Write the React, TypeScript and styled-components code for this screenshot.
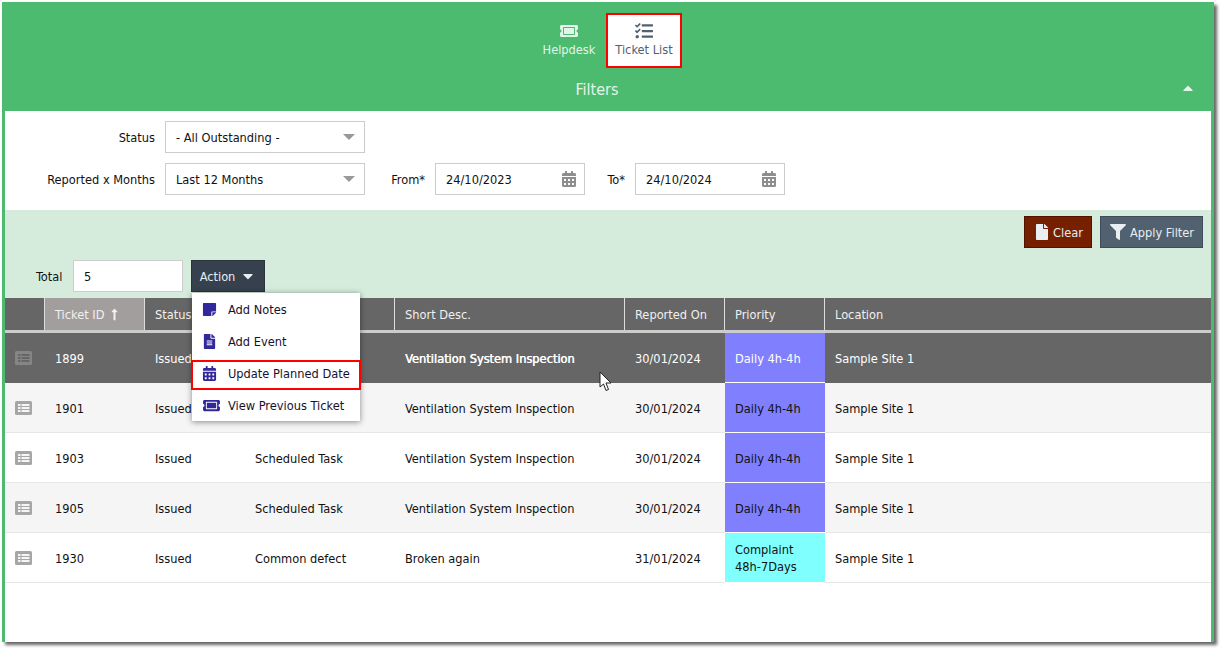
import React from 'react';
import styled, { createGlobalStyle } from 'styled-components';
import {
  FaCalendarAlt,
  FaCaretDown,
  FaCaretUp,
  FaFile,
  FaFileAlt,
  FaFilter,
  FaLongArrowAltUp,
  FaStickyNote,
  FaTasks,
  FaTicketAlt,
} from 'react-icons/fa';

const GlobalStyle = createGlobalStyle`
  html, body {
    margin: 0;
    padding: 0;
    background: #fff;
    height: 100%;
  }
  body {
    font-family: 'DejaVu Sans Condensed', 'DejaVu Sans', sans-serif;
    font-size: 12.7px;
    color: #111;
  }
`;

const Frame = styled.div`
  position: relative;
  box-sizing: border-box;
  width: 1212px;
  height: 640px;
  margin-left: 2px;
  top: 2px;
  border-left: 3px solid #4cba6f;
  border-right: 3px solid #4cba6f;
  box-shadow: 3px 3px 3px rgba(0, 0, 0, 0.6);
  background: #fff;
`;

const Header = styled.header`
  background: #4cba6f;
  height: 109px;
  margin: 0 -3px;
  display: flex;
  flex-direction: column;
`;

const Nav = styled.nav`
  display: flex;
  justify-content: center;
  padding: 11px 0 0 0;
  height: 55px;
  margin-right: 4px;
`;

const NavItem = styled.div<{ $active?: boolean }>`
  box-sizing: border-box;
  width: 76px;
  height: 55px;
  display: flex;
  flex-direction: column;
  align-items: center;
  justify-content: center;
  gap: 2px;
  padding-bottom: 3px;
  padding-left: ${(p) => (p.$active ? '0' : '2px')};
  background: ${(p) => (p.$active ? '#fff' : 'transparent')};
  border: 2px solid ${(p) => (p.$active ? '#f00' : 'transparent')};
  color: ${(p) => (p.$active ? '#52616f' : '#e3f5e8')};
  svg {
    font-size: 18px;
  }
`;

const FilterBar = styled.div`
  flex: 1;
  display: flex;
  align-items: center;
  justify-content: center;
  position: relative;
  padding-right: 22px;
  color: #e3f5e8;
  font-size: 16px;
  svg {
    position: absolute;
    right: 18px;
    top: 12px;
    font-size: 16px;
  }
`;

const FilterForm = styled.section`
  height: 99px;
  box-sizing: border-box;
  padding-top: 10px;
  display: flex;
  flex-direction: column;
  gap: 10px;
`;

const FormRow = styled.div`
  display: flex;
  align-items: center;
  height: 32px;
`;

const FieldLabel = styled.label<{ $width: number }>`
  width: ${(p) => p.$width}px;
  padding-right: 10px;
  box-sizing: border-box;
  text-align: right;
  flex: none;
`;

const Field = styled.div<{ $width: number }>`
  box-sizing: border-box;
  width: ${(p) => p.$width}px;
  height: 32px;
  border: 1px solid #ccc;
  background: #fff;
  padding: 0 7px 0 10px;
  display: flex;
  align-items: center;
  justify-content: space-between;
  flex: none;
  svg {
    color: #8e8e8e;
    font-size: 16px;
  }
`;

const Caret = styled.span`
  width: 0;
  height: 0;
  margin-right: 2px;
  border-left: 6px solid transparent;
  border-right: 6px solid transparent;
  border-top: 6px solid #999;
`;

const ActionArea = styled.section`
  height: 88px;
  background: #d5ecdd;
  display: flex;
  flex-direction: column;
  position: relative;
`;

const ButtonRow = styled.div`
  display: flex;
  justify-content: flex-end;
  gap: 8px;
  padding: 6px 8px 0 0;
  height: 50px;
  box-sizing: border-box;
`;

const FilterButton = styled.button<{ $bg: string; $border: string; $width: number; $gap: number }>`
  box-sizing: border-box;
  width: ${(p) => p.$width}px;
  height: 32px;
  padding: 0 0 0 9px;
  display: flex;
  align-items: center;
  gap: ${(p) => p.$gap}px;
  font: inherit;
  color: #e8eef2;
  background: ${(p) => p.$bg};
  border: 1px solid ${(p) => p.$border};
  white-space: nowrap;
  svg {
    font-size: 16px;
    flex: none;
  }
`;

const TotalRow = styled.div`
  display: flex;
  align-items: center;
  height: 32px;
  padding-left: 31px;
`;

const TotalLabel = styled.span`
  width: 37px;
`;

const TotalInput = styled.div`
  box-sizing: border-box;
  width: 110px;
  height: 32px;
  margin-right: 8px;
  padding-left: 10px;
  background: #fff;
  border: 1px solid #ccc;
  display: flex;
  align-items: center;
`;

const ActionButton = styled.button`
  box-sizing: border-box;
  width: 74px;
  height: 32px;
  display: flex;
  align-items: center;
  justify-content: center;
  gap: 5px;
  font: inherit;
  color: #e6edf3;
  background: #36414d;
  border: 1px solid #2b343e;
  svg {
    font-size: 16px;
  }
`;

const HEAD_COLUMNS = '39px 100px 100px 150px 230px 100px 100px 1fr';
const BODY_COLUMNS = '40px 100px 100px 150px 230px 100px 100px 1fr';

const HeadRow = styled.div`
  display: grid;
  grid-template-columns: ${HEAD_COLUMNS};
  height: 32px;
  background: #666;
  color: #f0f0f0;
  border-bottom: 3px solid;
  border-image: linear-gradient(#fff 0 1px, #ccc 1px) 3;
  box-sizing: content-box;
`;

const HeadCell = styled.div<{ $sorted?: boolean }>`
  display: flex;
  align-items: center;
  gap: 4px;
  padding-left: 10px;
  border-left: 1px solid #ddd;
  background: ${(p) => (p.$sorted ? '#a39e9e' : 'transparent')};
  &:first-child {
    border-left: none;
  }
  svg {
    font-size: 13px;
  }
`;

const BodyRow = styled.div<{ $variant: 'selected' | 'odd' | 'even' }>`
  display: grid;
  grid-template-columns: ${BODY_COLUMNS};
  height: 50px;
  box-sizing: border-box;
  border-bottom: 1px solid ${(p) => (p.$variant === 'selected' ? '#666' : '#e6e6e6')};
  color: ${(p) => (p.$variant === 'selected' ? '#fff' : '#111')};
  background: ${(p) =>
    p.$variant === 'selected' ? '#666' : p.$variant === 'odd' ? '#f5f5f5' : '#fff'};
`;

const Cell = styled.div<{ $strong?: boolean }>`
  display: flex;
  align-items: center;
  padding: 1px 0 0 10px;
  ${(p) => p.$strong && 'text-shadow: 0.5px 0 0 currentColor;'}
`;

const IconCell = styled(Cell)`
  padding: 0 0 0 10px;
`;

const PriorityCell = styled(Cell)<{ $bg: string }>`
  background: ${(p) => p.$bg};
  line-height: 17px;
  margin-bottom: -1px;
  padding-right: 6px;
  border-bottom: 1px solid #fff;
`;

const ListIcon = ({ selected }: { selected: boolean }) => (
  <svg width="17" height="14" viewBox="0 0 17 14">
    <rect width="17" height="14" rx="1.5" fill={selected ? '#858585' : '#a6a6a6'} />
    <g fill={selected ? '#666' : '#f5f5f5'}>
      <rect x="3" y="3" width="2.5" height="2" />
      <rect x="3" y="6" width="2.5" height="2" />
      <rect x="3" y="9" width="2.5" height="2" />
      <rect x="6.5" y="3" width="8" height="2" />
      <rect x="6.5" y="6" width="8" height="2" />
      <rect x="6.5" y="9" width="8" height="2" />
    </g>
  </svg>
);

const Menu = styled.ul`
  position: absolute;
  left: 187px;
  top: 291px;
  width: 168px;
  height: 128px;
  margin: 0;
  padding: 0;
  list-style: none;
  background: #fff;
  box-shadow: 0 1px 6px rgba(0, 0, 0, 0.45);
  z-index: 5;
  display: flex;
  flex-direction: column;
`;

const MenuItem = styled.li<{ $highlighted?: boolean }>`
  position: relative;
  height: 32px;
  box-sizing: border-box;
  display: flex;
  align-items: center;
  padding-left: 10px;
  color: #16122e;
  ${(p) =>
    p.$highlighted &&
    `&::after {
      content: '';
      position: absolute;
      left: -1px;
      right: -1px;
      top: 3px;
      bottom: -1px;
      border: 2px solid #f00;
    }`}
  svg {
    width: 15px;
    height: 15px;
    margin-right: 11px;
    color: #33289b;
    flex: none;
  }
`;

const TicketGlyph = styled(FaTicketAlt)`
  && {
    width: 19px;
    height: 15px;
    margin-right: 7px;
  }
`;

const Cursor = styled.svg`
  position: absolute;
  left: 594px;
  top: 369px;
  z-index: 6;
`;

type Ticket = {
  id: string;
  status: string;
  type: string;
  desc: string;
  reported: string;
  priority: string;
  colour: string;
};

const tickets: Ticket[] = [
  { id: '1899', status: 'Issued', type: 'Scheduled Task', desc: 'Ventilation System Inspection', reported: '30/01/2024', priority: 'Daily 4h-4h', colour: '#8080ff' },
  { id: '1901', status: 'Issued', type: 'Scheduled Task', desc: 'Ventilation System Inspection', reported: '30/01/2024', priority: 'Daily 4h-4h', colour: '#8080ff' },
  { id: '1903', status: 'Issued', type: 'Scheduled Task', desc: 'Ventilation System Inspection', reported: '30/01/2024', priority: 'Daily 4h-4h', colour: '#8080ff' },
  { id: '1905', status: 'Issued', type: 'Scheduled Task', desc: 'Ventilation System Inspection', reported: '30/01/2024', priority: 'Daily 4h-4h', colour: '#8080ff' },
  { id: '1930', status: 'Issued', type: 'Common defect', desc: 'Broken again', reported: '31/01/2024', priority: 'Complaint 48h-7Days', colour: '#80ffff' },
];

const rowVariant = (i: number) => (i === 0 ? 'selected' : i % 2 === 1 ? 'odd' : 'even');

export default function App() {
  return (
    <>
      <GlobalStyle />
      <Frame>
        <Header>
          <Nav>
            <NavItem>
              <FaTicketAlt />
              Helpdesk
            </NavItem>
            <NavItem $active>
              <FaTasks />
              Ticket List
            </NavItem>
          </Nav>
          <FilterBar>
            Filters
            <FaCaretUp />
          </FilterBar>
        </Header>

        <FilterForm>
          <FormRow>
            <FieldLabel $width={160}>Status</FieldLabel>
            <Field $width={200}>
              - All Outstanding -
              <Caret />
            </Field>
          </FormRow>
          <FormRow>
            <FieldLabel $width={160}>Reported x Months</FieldLabel>
            <Field $width={200}>
              Last 12 Months
              <Caret />
            </Field>
            <FieldLabel $width={70}>From*</FieldLabel>
            <Field $width={150}>
              24/10/2023
              <FaCalendarAlt />
            </Field>
            <FieldLabel $width={50}>To*</FieldLabel>
            <Field $width={150}>
              24/10/2024
              <FaCalendarAlt />
            </Field>
          </FormRow>
        </FilterForm>

        <ActionArea>
          <ButtonRow>
            <FilterButton $bg="#762000" $border="#4d1500" $width={68} $gap={3}>
              <FaFile />
              Clear
            </FilterButton>
            <FilterButton $bg="#52616f" $border="#3f4c59" $width={103} $gap={4}>
              <FaFilter />
              Apply Filter
            </FilterButton>
          </ButtonRow>
          <TotalRow>
            <TotalLabel>Total</TotalLabel>
            <TotalInput>5</TotalInput>
            <ActionButton>
              Action
              <FaCaretDown />
            </ActionButton>
          </TotalRow>
        </ActionArea>

        <HeadRow>
          <HeadCell />
          <HeadCell $sorted>
            Ticket ID
            <FaLongArrowAltUp />
          </HeadCell>
          <HeadCell>Status</HeadCell>
          <HeadCell />
          <HeadCell>Short Desc.</HeadCell>
          <HeadCell>Reported On</HeadCell>
          <HeadCell>Priority</HeadCell>
          <HeadCell>Location</HeadCell>
        </HeadRow>

        {tickets.map((t, i) => (
          <BodyRow key={t.id} $variant={rowVariant(i)}>
            <IconCell>
              <ListIcon selected={i === 0} />
            </IconCell>
            <Cell>{t.id}</Cell>
            <Cell>{t.status}</Cell>
            <Cell>{i > 1 ? t.type : ''}</Cell>
            <Cell $strong={i === 0}>{t.desc}</Cell>
            <Cell>{t.reported}</Cell>
            <PriorityCell $bg={t.colour}>{t.priority}</PriorityCell>
            <Cell>Sample Site 1</Cell>
          </BodyRow>
        ))}

        <Menu>
          <MenuItem>
            <FaStickyNote />
            Add Notes
          </MenuItem>
          <MenuItem>
            <FaFileAlt />
            Add Event
          </MenuItem>
          <MenuItem $highlighted>
            <FaCalendarAlt />
            Update Planned Date
          </MenuItem>
          <MenuItem>
            <TicketGlyph />
            View Previous Ticket
          </MenuItem>
        </Menu>

        <Cursor width="14" height="21" viewBox="0 0 14 21">
          <path d="M1 1 L1 16 L4.5 13 L7 19.5 L9.5 18.5 L7 12 L12 12 Z" fill="#fff" stroke="#222" strokeWidth="1" />
        </Cursor>
      </Frame>
    </>
  );
}
